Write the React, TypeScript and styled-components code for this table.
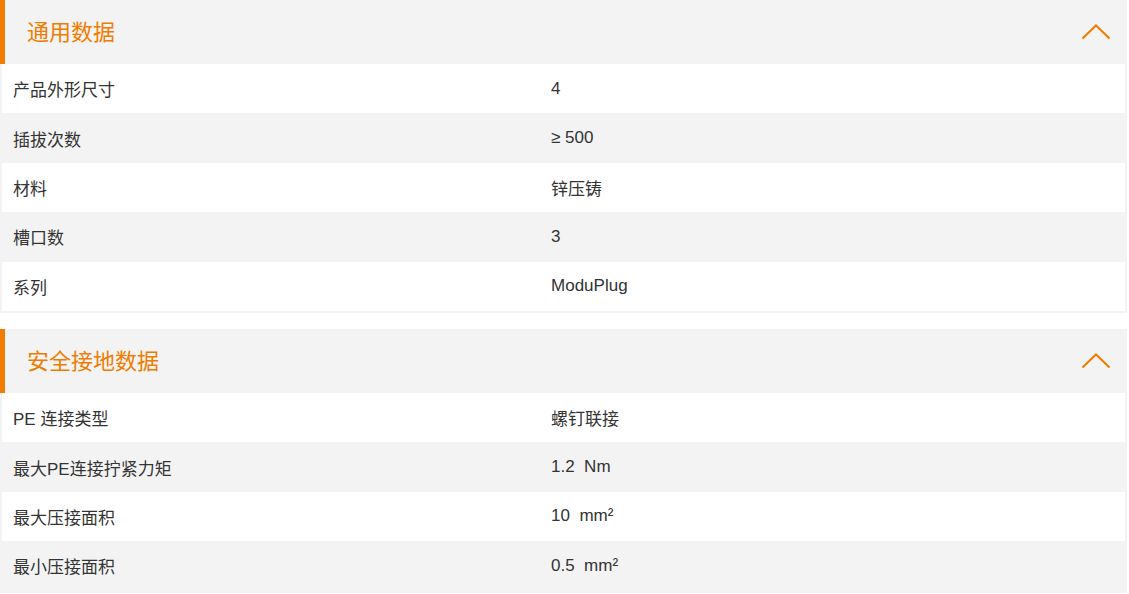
import React from "react";
import styled, { createGlobalStyle } from "styled-components";

const GlobalStyle = createGlobalStyle`
  html, body { margin: 0; padding: 0; background: #ffffff; }
  body { font-family: "Liberation Sans", "Noto Sans CJK SC", Arial, sans-serif; color: #333333; }
`;

const Page = styled.div`
  width: 1127px;
  display: flex;
  flex-direction: column;
  gap: 16px;
`;

const Section = styled.section`
  border: 2px solid #f3f3f3;
  border-top: none;
  display: flex;
  flex-direction: column;
`;

const Header = styled.div`
  height: 64px;
  margin: 0 -2px;
  background: #f3f3f3;
  border-left: 5px solid #f07c00;
  display: flex;
  align-items: center;
  justify-content: space-between;
  padding: 0 16px 0 22px;
  box-sizing: border-box;
`;

const Title = styled.h2`
  margin: 0 0 3px;
  font-family: "Noto Sans CJK SC", sans-serif;
  font-weight: 400;
  font-size: 22px;
  line-height: 1.2;
  color: #f07c00;
`;

const Row = styled.div<{ $alt: boolean }>`
  height: 49.4px;
  display: grid;
  grid-template-columns: 48% 52%;
  align-items: center;
  background: ${(p) => (p.$alt ? "#f3f3f3" : "#ffffff")};
`;

const Cell = styled.div`
  padding: 0 11px 0 11px;
  font-size: 17px;
  color: #333333;
  white-space: pre;
`;

const ValueCell = styled(Cell)`
  padding-left: 10px;
`;

const Chevron = () => (
  <svg width="30" height="16" viewBox="0 0 30 16" fill="none">
    <path d="M1.5 14.5 L15 1.5 L28.5 14.5" stroke="#f07c00" strokeWidth="2" />
  </svg>
);

const sections: { title: string; rows: [string, string][] }[] = [
  {
    title: "通用数据",
    rows: [
      ["产品外形尺寸", "4"],
      ["插拔次数", "≥ 500"],
      ["材料", "锌压铸"],
      ["槽口数", "3"],
      ["系列", "ModuPlug"],
    ],
  },
  {
    title: "安全接地数据",
    rows: [
      ["PE 连接类型", "螺钉联接"],
      ["最大PE连接拧紧力矩", "1.2  Nm"],
      ["最大压接面积", "10  mm²"],
      ["最小压接面积", "0.5  mm²"],
    ],
  },
];

export default function App() {
  return (
    <>
      <GlobalStyle />
      <Page>
        {sections.map((s) => (
          <Section key={s.title}>
            <Header>
              <Title>{s.title}</Title>
              <Chevron />
            </Header>
            {s.rows.map(([k, v], i) => (
              <Row key={k} $alt={i % 2 === 1}>
                <Cell>{k}</Cell>
                <ValueCell>{v}</ValueCell>
              </Row>
            ))}
          </Section>
        ))}
      </Page>
    </>
  );
}
